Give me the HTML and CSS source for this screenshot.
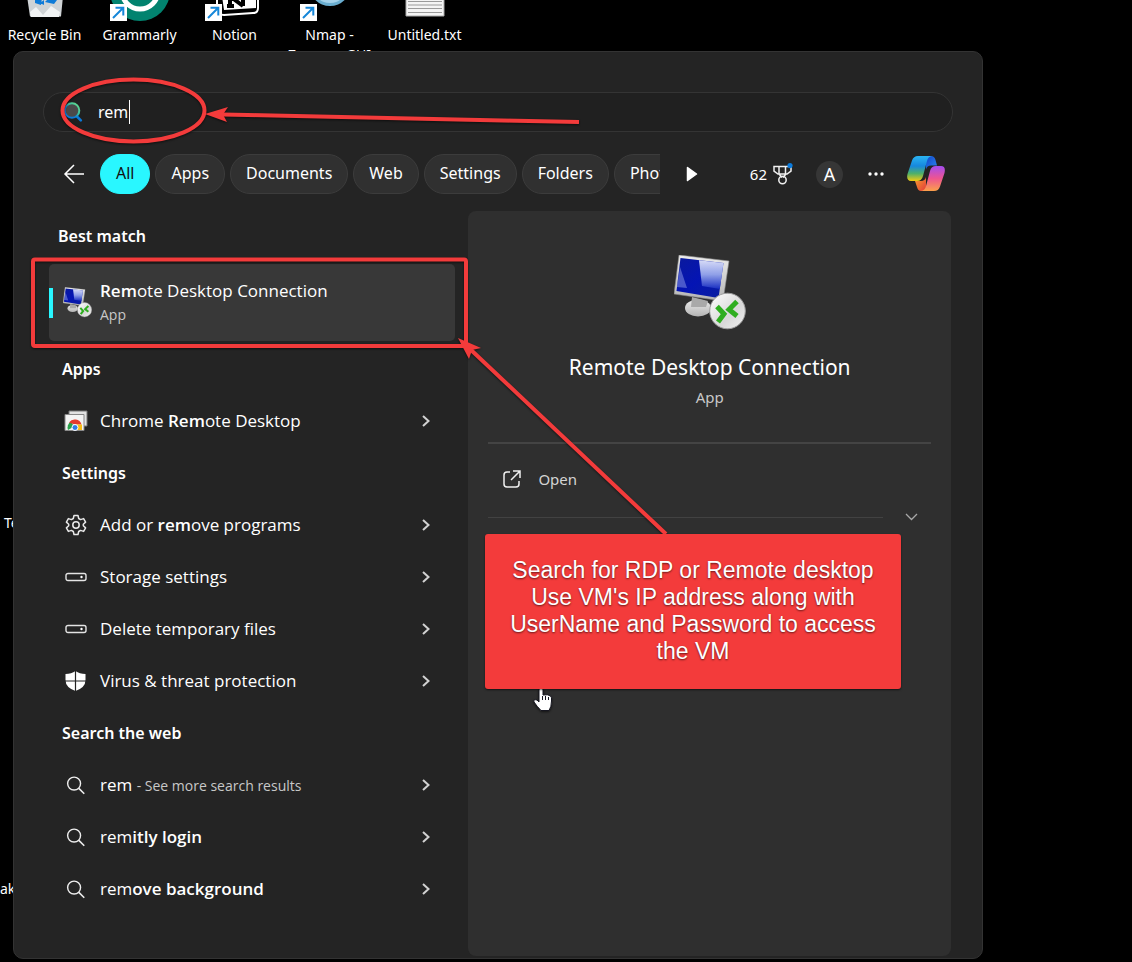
FILE: index.html
```html
<!DOCTYPE html>
<html lang="en">
<head>
<meta charset="utf-8">
<meta name="viewport" content="width=device-width, initial-scale=1">
<title>Search</title>
<link rel="stylesheet" href="styles.css">
</head>
<body>
<svg class="defs" width="0" height="0" aria-hidden="true">
  <defs>
    <linearGradient id="screen" x1="0" y1="0" x2="1" y2="1"><stop offset="0" stop-color="#0a1a9c"/><stop offset=".5" stop-color="#0414b4"/><stop offset="1" stop-color="#0a1e9e"/></linearGradient>
    <linearGradient id="glare" x1="0" y1="0" x2="0" y2="1"><stop offset="0" stop-color="#eef1ff"/><stop offset=".5" stop-color="#9fafee"/><stop offset="1" stop-color="#1a30c4"/></linearGradient>
    <linearGradient id="frame" x1="0" y1="0" x2="0" y2="1"><stop offset="0" stop-color="#ececec"/><stop offset="1" stop-color="#b4b4b4"/></linearGradient>
    <linearGradient id="disc" x1="0" y1="0" x2="1" y2="1"><stop offset="0" stop-color="#ffffff"/><stop offset=".6" stop-color="#d8d8d8"/><stop offset="1" stop-color="#f2f2f2"/></linearGradient>
    <linearGradient id="lens" x1="1" y1="0" x2="0" y2="1"><stop offset="0" stop-color="#6be08a"/><stop offset=".4" stop-color="#39bfa0"/><stop offset=".6" stop-color="#0a7fdc"/><stop offset="1" stop-color="#0a78d8"/></linearGradient>
    <linearGradient id="cpA" x1="0" y1="0" x2="0" y2="1"><stop offset="0" stop-color="#2bb4f2"/><stop offset=".4" stop-color="#1688de"/><stop offset=".7" stop-color="#4fb06a"/><stop offset="1" stop-color="#f2cb12"/></linearGradient>
    <linearGradient id="cpB" x1="0" y1="0" x2="0" y2="1"><stop offset="0" stop-color="#a44cf0"/><stop offset=".5" stop-color="#ee5590"/><stop offset="1" stop-color="#fba04a"/></linearGradient>
    <linearGradient id="cpC" x1="0" y1="0" x2="1" y2="1"><stop offset="0" stop-color="#1346c8"/><stop offset="1" stop-color="#2a86f0"/></linearGradient>
    <linearGradient id="cpD" x1="0" y1="0" x2="1" y2="1"><stop offset="0" stop-color="#f7a02c"/><stop offset="1" stop-color="#e23b3b"/></linearGradient>
    <symbol id="rdp" viewBox="0 0 72 76">
      <ellipse cx="24" cy="53" rx="13" ry="8.500" fill="url(#frame)"/>
      <path d="M18 42l16 4-2 6H17z" fill="#a9a9a9"/>
      <path d="M5 0l50 6-6 40L0 39z" fill="url(#frame)" stroke="#888" stroke-width=".6"/>
      <path d="M6.500 3l43 5-5 35L2.500 36z" fill="url(#screen)"/>
      <path d="M25 5.200l24.500 2.800-3.700 26L28 31z" fill="url(#glare)" opacity=".9"/>
      <path d="M6 12l7 21-10-1z" fill="#8f9ee8" opacity=".5"/>
      <circle cx="53.500" cy="56" r="17.800" fill="url(#disc)" stroke="#9c9c9c"/>
      <path d="M43 51.500l7 7.500-6 8" fill="none" stroke="#2fae20" stroke-width="5"/>
      <path d="M63 46.500l-8 8 8 6.500" fill="none" stroke="#2fae20" stroke-width="5"/>
    </symbol>
    <symbol id="chev" viewBox="0 0 12 14"><path d="M3 2l5.500 5L3 12" fill="none" stroke="#d2d2d2" stroke-width="2"/></symbol>
    <symbol id="mag" viewBox="0 0 20 20"><circle cx="8" cy="8" r="6.800" fill="none" stroke="#eee" stroke-width="1.500"/><path d="M13 13l5.700 5.700" stroke="#eee" stroke-width="1.600"/></symbol>
    <symbol id="drive" viewBox="0 0 22 10"><rect x="1" y="1.500" width="20" height="7" rx="2" fill="none" stroke="#e4e4e4" stroke-width="1.400"/><circle cx="16.500" cy="5" r="1.200" fill="#fff"/></symbol>
    <symbol id="shortcut" viewBox="0 0 17 17"><path d="M0 0h17v17H0z" fill="#fff"/><path d="M3 14L13 4M5.500 3.700H13.300V11.500" fill="none" stroke="#1687d9" stroke-width="2"/></symbol>
  </defs>
</svg>

<main class="desktop">
  <ul class="shortcuts">
    <li><svg width="60" height="21" viewBox="0 0 60 21"><path d="M12-4h36l-2 20.500H15z" fill="#cfd3d6"/><path d="M15 12l6-5 7 8 8-9 9 6-1 5H16z" fill="#f1f3f4"/><path d="M20-2l7 0-1 7-6-2zM30 2l4-4 8 2-3 4zM25 3l4-3v5z" fill="#0f7bd8"/></svg><span>Recycle Bin</span></li>
    <li><svg width="60" height="21" viewBox="0 0 60 21"><circle cx="30" cy="-9" r="30" fill="#02836f"/><circle cx="30" cy="-9" r="18" fill="none" stroke="#fff" stroke-width="5"/><use href="#shortcut" x="0" y="4" width="17" height="17"/></svg><span>Grammarly</span></li>
    <li><svg width="60" height="21" viewBox="0 0 60 21"><path d="M12-6h41v14q0 5-5 5l-29 2q-7 0-7-6z" fill="#000" stroke="#fff" stroke-width="2"/><path d="M17-4h34v12l-32 2z" fill="#fff"/><path d="M25-3v8M22 6h7M26-3l12 9M38-4v10" fill="none" stroke="#000" stroke-width="4"/><use href="#shortcut" x="0" y="4" width="17" height="17"/></svg><span>Notion</span></li>
    <li><svg width="60" height="21" viewBox="0 0 60 21"><circle cx="30" cy="-15" r="21" fill="#6aaed0"/><circle cx="30" cy="-15" r="18" fill="#a5d2ea"/><use href="#shortcut" x="0" y="4" width="17" height="17"/></svg><span>Nmap -<br>Zenmap GUI</span></li>
    <li><svg width="60" height="21" viewBox="0 0 60 21"><path d="M11-4h38v20H11z" fill="#f4f4f4" stroke="#aaa"/><path d="M13 1.500h34M13 5h34M13 8.500h34M13 12.500h34" stroke="#9a9a9a"/></svg><span>Untitled.txt</span></li>
  </ul>
  <span class="behind behind-a">Teams</span>
  <span class="behind behind-b">ake</span>

  <section class="panel">
    <label class="search" aria-label="Search">
      <svg width="20" height="20" viewBox="0 0 20 20"><path d="M13 13.500l4.800 4.800" stroke="#0a78d8" stroke-width="2.600" stroke-linecap="round"/><circle cx="9" cy="8.500" r="7.300" fill="#4a4a4a" stroke="url(#lens)" stroke-width="2"/></svg>
      <input class="query" type="text" value="rem" size="3" aria-label="Search"><i class="caret"></i>
    </label>

    <nav class="filters">
      <button class="icon-btn back" aria-label="Back"><svg width="22" height="20" viewBox="0 0 22 20"><path d="M21 10H2M11 1L2 10l9 9" fill="none" stroke="#fff" stroke-width="1.500"/></svg></button>
      <div class="pills">
        <button class="pill active">All</button>
        <button class="pill">Apps</button>
        <button class="pill">Documents</button>
        <button class="pill">Web</button>
        <button class="pill">Settings</button>
        <button class="pill">Folders</button>
        <button class="pill">Photos</button>
      </div>
      <button class="icon-btn next" aria-label="More filters"><svg width="12" height="16" viewBox="0 0 12 16"><path d="M1.500 1.500L10.500 8l-9 6.500z" fill="#fff" stroke="#fff" stroke-width="1.500" stroke-linejoin="round"/></svg></button>
      <div class="tools">
        <button class="icon-btn rewards"><span>62</span><svg width="20" height="22" viewBox="0 0 20 22"><g fill="none" stroke="#f0f0f0" stroke-width="1.500"><path d="M1 3.500h17v4.500l-4 3H5L1 8zM6 3.500V11M12.500 3.500V11M6 11l3 3.500M13 11l-3 3.500"/><circle cx="9.500" cy="17" r="3.700"/></g><circle cx="17" cy="2.600" r="2.600" fill="#0a7bdd"/></svg></button>
        <button class="avatar">A</button>
        <button class="icon-btn" aria-label="Options"><svg width="18" height="6" viewBox="0 0 18 6"><g fill="#fff"><circle cx="4" cy="3" r="1.700"/><circle cx="10" cy="3" r="1.700"/><circle cx="16" cy="3" r="1.700"/></g></svg></button>
        <button class="icon-btn copilot" aria-label="Copilot"><svg width="38" height="35" viewBox="0 0 38 35"><path d="M19 0h5q3.500 0 4.500 4l1.500 5.500h-6q-4 0-5 4z" fill="url(#cpC)"/><path d="M19 35h-5q-3 0-4-4L8 25h6q4 0 5-4z" fill="url(#cpD)"/><path d="M11 0H25q-4 .5-5 5l-4 15q-1.200 5-6 5H4q-5 0-3.500-7L5 4.500Q6.500 0 11 0z" fill="url(#cpA)"/><path d="M27 35H14q4-.5 5-5l4-15q1.200-5 6-5h5q5 0 3.500 7L33 30.500Q31.500 35 27 35z" fill="url(#cpB)"/></svg></button>
      </div>
    </nav>

    <div class="content">
      <div class="results">
        <h2 class="best">Best match</h2>
        <button class="card"><svg width="29" height="31"><use href="#rdp"/></svg><span class="card-text"><span><b>Rem</b>ote Desktop Connection</span><small>App</small></span></button>
        <h2>Apps</h2>
        <button class="row"><svg width="24" height="22" viewBox="0 0 24 22"><path d="M5 1h18v15H5z" fill="#e2e2e2" stroke="#777"/><path d="M1 4.500h19v16H1z" fill="#f4f4f4" stroke="#888"/><path d="M4 20a7 7 0 0 1 3-8.500l3 5z" fill="#2ba24c"/><path d="M5 12.500a7 7 0 0 1 12.500 2h-7z" fill="#e43b2d"/><path d="M12 14.500h6V20h-6z" fill="#f6bc16"/><circle cx="11" cy="17.500" r="3" fill="#2f7de8" stroke="#fff"/></svg><span>Chrome <b>Rem</b>ote Desktop</span><svg class="go" width="12" height="14"><use href="#chev"/></svg></button>
        <h2>Settings</h2>
        <button class="row"><svg width="24" height="22" viewBox="0 0 24 22"><g fill="none" stroke="#e8e8e8" stroke-width="1.500" stroke-linejoin="round"><path d="M10 1.500h4l.7 3 1.900 1.100 3-1 2 3.500-2.300 2.100v1.600l2.300 2.100-2 3.500-3-1-1.900 1.100-.7 3h-4l-.7-3-1.900-1.100-3 1-2-3.500 2.300-2.100v-1.600L2.400 8.100l2-3.500 3 1 1.900-1.100z"/><circle cx="12" cy="11" r="3.200"/></g></svg><span>Add or <b>rem</b>ove programs</span><svg class="go" width="12" height="14"><use href="#chev"/></svg></button>
        <button class="row"><svg width="24" height="10"><use href="#drive"/></svg><span>Storage settings</span><svg class="go" width="12" height="14"><use href="#chev"/></svg></button>
        <button class="row"><svg width="24" height="10"><use href="#drive"/></svg><span>Delete temporary files</span><svg class="go" width="12" height="14"><use href="#chev"/></svg></button>
        <button class="row"><svg width="24" height="20" viewBox="0 0 24 20"><path d="M11.500 0q4 3 10 3v6q0 7.500-10 11Q1.500 16.500 1.500 9V3q6 0 10-3z" fill="#fff"/><path d="M11.500 0v20M1 10h21" stroke="#242424" stroke-width="1.200"/></svg><span>Virus &amp; threat protection</span><svg class="go" width="12" height="14"><use href="#chev"/></svg></button>
        <h2>Search the web</h2>
        <button class="row"><svg width="24" height="19"><use href="#mag"/></svg><span>rem <small>- See more search results</small></span><svg class="go" width="12" height="14"><use href="#chev"/></svg></button>
        <button class="row"><svg width="24" height="19"><use href="#mag"/></svg><span>rem<b>itly login</b></span><svg class="go" width="12" height="14"><use href="#chev"/></svg></button>
        <button class="row"><svg width="24" height="19"><use href="#mag"/></svg><span>rem<b>ove background</b></span><svg class="go" width="12" height="14"><use href="#chev"/></svg></button>
      </div>

      <aside class="preview">
        <svg class="hero" width="72" height="76"><use href="#rdp"/></svg>
        <h1>Remote Desktop Connection</h1>
        <p>App</p>
        <button class="open"><svg width="18" height="18" viewBox="0 0 18 18"><path d="M7 2H4Q1 2 1 5v9q0 3 3 3h9q3 0 3-3v-3M10 1h7v7M17 1L8 10" fill="none" stroke="#f0f0f0" stroke-width="1.500"/></svg><span>Open</span></button>
        <div class="more"><hr><button class="icon-btn" aria-label="Show more"><svg width="13" height="8" viewBox="0 0 13 8"><path d="M1 1l5.500 5.500L12 1" fill="none" stroke="#a8a8a8" stroke-width="1.300"/></svg></button></div>
      </aside>
    </div>
  </section>

  <svg class="marks" width="1132" height="962" viewBox="0 0 1132 962" aria-hidden="true">
    <path d="M534 702q-1-3 3-2l2 2v-12q0-3 2-3t2 3v5q5-1 7.500 1 1.500 1 1 5 0 6-2.500 9.500h-8q-4-4-7-8.500z" fill="#fff" stroke="#15151f"/>
    <path d="M542.500 696v4M545.500 696v4M548.500 697v3" stroke="#15151f"/>
    <g fill="none" stroke="#f33b3b" stroke-width="4">
      <ellipse cx="133.500" cy="110.500" rx="71" ry="31"/>
      <rect x="33" y="259.500" width="433" height="86.500" rx="2"/>
      <path d="M222 114.500L579 122M470 349L666 534"/>
    </g>
    <path d="M205 114l23-7-5 7.500 4 7.500zM458 338l23 10-9 2-3 9z" fill="#f33b3b"/>
  </svg>
  <div class="callout">Search for RDP or Remote desktop<br>Use VM's IP address along with UserName and Password to access the VM</div>
</main>
</body>
</html>
```

FILE: styles.css
```css
* { box-sizing: border-box; }

body {
  margin: 0;
  background: #000;
  color: #fff;
  font: 16px/24px "Noto Sans", "Open Sans", sans-serif;
}

button, input { font: inherit; color: inherit; border: 0; background: none; padding: 0; }
b, h2 { font-weight: 600; }
svg { display: block; flex: none; }
.defs { position: absolute; }

.desktop {
  position: relative;
  display: flex;
  min-height: 100vh;
  padding: 51px 149px 3px 13px;
  overflow: hidden;
}

.shortcuts {
  position: absolute;
  top: 0;
  left: -3px;
  display: grid;
  grid-template-columns: repeat(5, 95px);
  margin: 0;
  padding: 0;
  list-style: none;
  font-size: 14px;
  line-height: 20px;
  text-align: center;
}
.shortcuts li { display: flex; flex-direction: column; align-items: center; gap: 4px; }
.behind { position: absolute; font-size: 14px; }
.behind-a { left: 4px; top: 511px; }
.behind-b { left: 0; top: 877px; }

.panel {
  position: relative;
  flex: 1;
  min-width: 0;
  display: flex;
  flex-direction: column;
  padding: 40px 29px 2px;
  background: #242424;
  border: 1px solid #333;
  border-radius: 10px;
}

.search {
  display: flex;
  align-items: center;
  height: 40px;
  padding-left: 19px;
  background: #202020;
  border: 1px solid #343434;
  border-radius: 20px;
}
.query { width: 31px; field-sizing: content; margin-left: 15px; outline: 0; font-size: 16px; }
.caret { width: 1px; height: 24px; background: #fff; }

.filters { display: flex; align-items: center; height: 40px; margin-top: 22px; }
.icon-btn { display: flex; align-items: center; }
.back { margin: 0 15px 0 20px; }
.pills { display: flex; gap: 5px; width: 560px; overflow: hidden; }
.pill {
  flex: none;
  height: 40px;
  padding: 0 15px 2px;
  background: #303030;
  border: 1px solid #3c3c3c;
  border-radius: 20px;
}
.active { background: #29f7ff; border-color: #29f7ff; color: #111; }
.next { margin-left: 26px; }
.tools { display: flex; align-items: center; gap: 23px; margin-left: auto; padding-right: 8px; }
.rewards { gap: 6px; font-size: 15px; }
.avatar { width: 27px; height: 27px; border-radius: 50%; background: #363636; font-size: 18px; }
.copilot { padding-bottom: 2px; }

.content { flex: 1; display: grid; grid-template-columns: minmax(0, 16fr) minmax(0, 19fr); gap: 13px; margin-top: 17px; padding: 0 2px 0 6px; }
.results h2 { margin: 0; padding-left: 13px; font-size: 16px; line-height: 52px; }
.results .best { padding: 0 0 3px 9px; line-height: 50px; }
.card, .row { font-family: "Open Sans", "Noto Sans", sans-serif; font-size: 17px; }
.card {
  display: flex;
  align-items: center;
  gap: 8px;
  width: 100%;
  height: 77px;
  margin-bottom: 2px;
  padding-left: 10px;
  background: linear-gradient(#29f7ff, #29f7ff) 0 50% / 4px 30px no-repeat #383838;
  border-radius: 5px;
  text-align: left;
}
.card svg { margin-left: 4px; }
.card-text { display: flex; flex-direction: column; }
small { font-size: 14px; color: #c8c8c8; }
.row { display: flex; align-items: center; gap: 12px; width: 100%; height: 52px; padding: 0 23px 0 15px; text-align: left; }
.go { margin-left: auto; }

.preview {
  padding: 44px 20px;
  background: #2f2f2f;
  border-radius: 8px;
  text-align: center;
}
.hero { margin: 0 auto; }
h1 { margin: 21px 0 0; font-size: 21px; line-height: 30px; font-weight: 400; }
.preview p { margin: 3px 0 33px; font-size: 15px; color: #c8c8c8; }
.open {
  display: flex;
  align-items: center;
  gap: 17px;
  width: 100%;
  height: 71px;
  padding: 1px 0 0 15px;
  border-top: 2px solid #444;
  font-size: 15px;
  color: #d4d4d4;
}
.more { display: flex; align-items: center; gap: 22px; padding-right: 13px; }
hr { flex: 1; margin: 0; border: 0; border-top: 1px solid #424242; }

.marks { position: absolute; top: 0; left: 0; pointer-events: none; filter: drop-shadow(0 1px 1px #0009); }
.callout {
  position: absolute;
  top: 534px;
  left: 485px;
  width: 416px;
  padding: 23px 20px 24px;
  background: #f33b3b;
  border-radius: 3px;
  box-shadow: 0 1px 2px #0009;
  font: 23px/27px "Liberation Sans", Arial, sans-serif;
  text-align: center;
  text-shadow: 0 1px 2px #0009;
}
```
